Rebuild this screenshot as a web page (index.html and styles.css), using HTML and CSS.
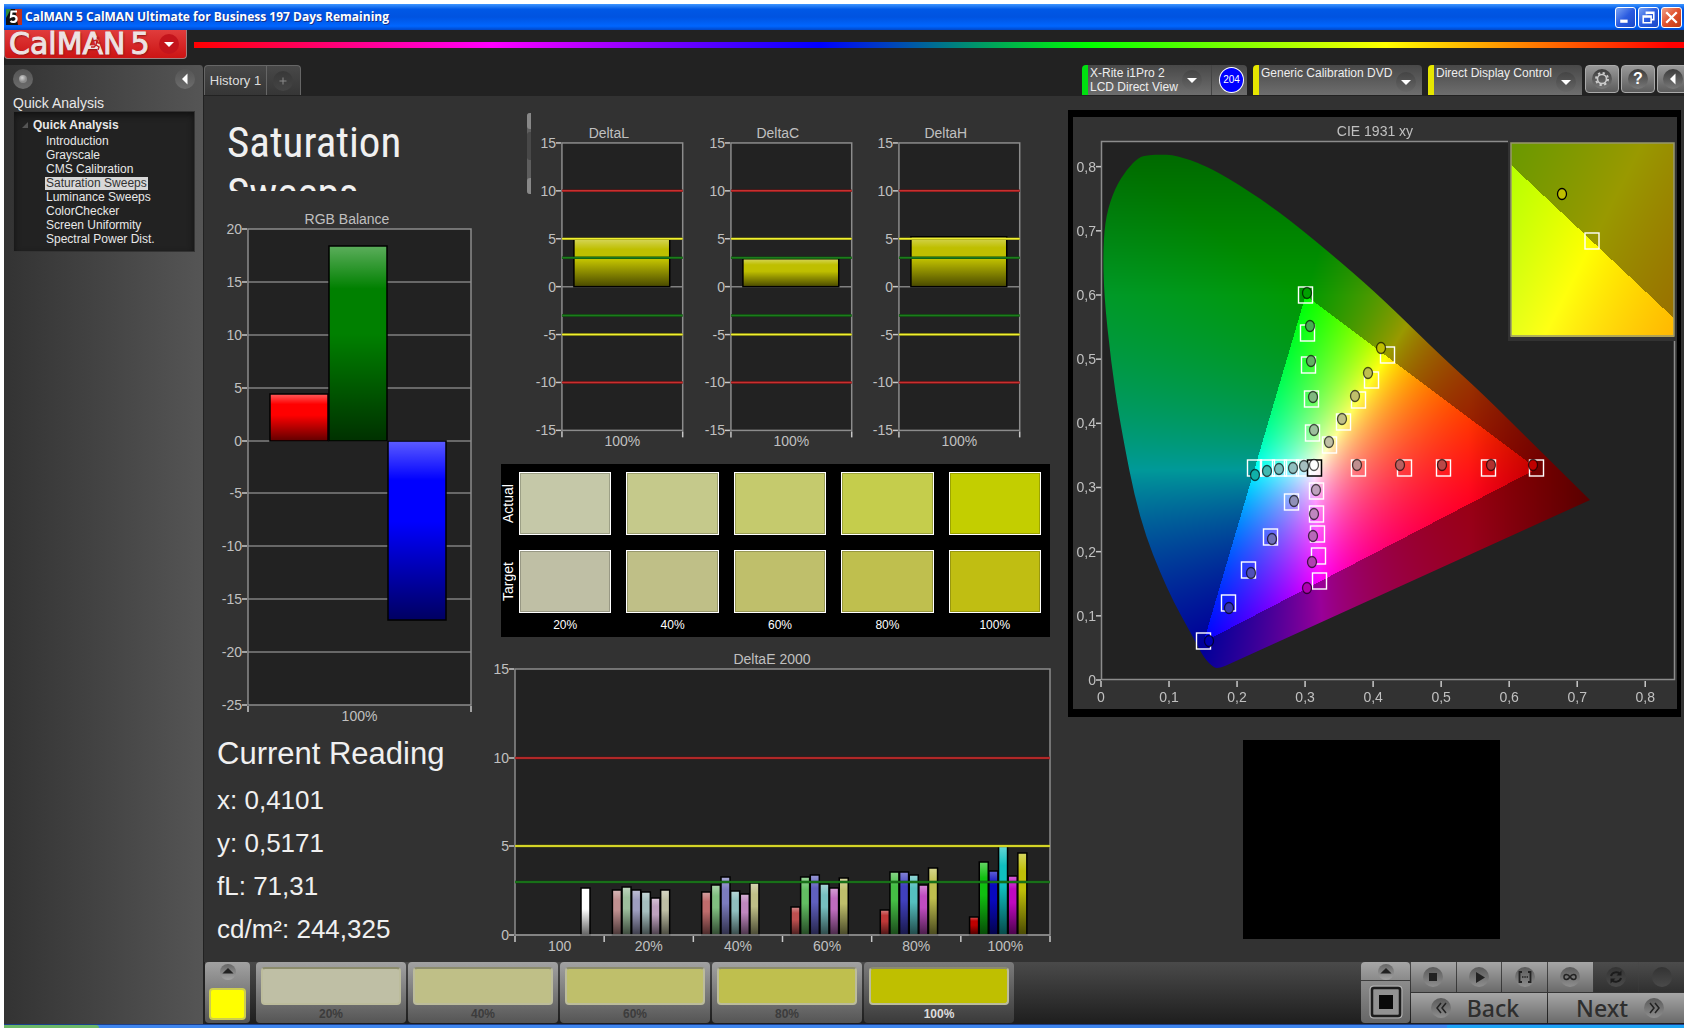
FILE: index.html
```html
<!DOCTYPE html>
<html lang="en">
<head>
<meta charset="utf-8">
<title>CalMAN 5</title>
<link rel="stylesheet" href="styles.css">
</head>
<body>
<div class="app">
  <div class="titlebar">
    <svg class="app-icon" viewBox="0 0 16 16" width="16" height="16" aria-hidden="true">
      <rect width="16" height="16" fill="#111"/><path d="M9 0h7v16h-4z" fill="#c0301c"/><path d="M0 0h5L0 9z" fill="#2f8a3a"/>
      <path d="M11 2.500H5.500L5 7.500c3-1.500 6 0 5.500 3S6 13.500 4.500 12" fill="none" stroke="#fff" stroke-width="2.200"/>
    </svg>
    <span class="titlebar-text">CalMAN 5 CalMAN Ultimate for Business 197 Days Remaining</span>
    <div class="window-buttons">
      <button class="win-btn" aria-label="Minimize"><svg viewBox="0 0 18 18"><path d="M4 12.500h7" stroke="#fff" stroke-width="3"/></svg></button>
      <button class="win-btn" aria-label="Restore"><svg viewBox="0 0 18 18"><path d="M7 6V4h7v7h-2M7 5h7M4 7.500h7.500V14H4zM4 8.500h7.500" fill="none" stroke="#fff" stroke-width="1.500"/></svg></button>
      <button class="win-btn win-close" aria-label="Close"><svg viewBox="0 0 18 18"><path d="M4 4l10 10M14 4L4 14" stroke="#fff" stroke-width="2.200"/></svg></button>
    </div>
  </div>

  <header class="brandbar">
    <button class="logo" aria-label="CalMAN 5 menu">
      <span class="logo-text">CalMAN</span><span class="logo-text">5</span>
      <svg class="logo-runner" viewBox="0 0 12 14" width="12" height="14" aria-hidden="true"><circle cx="7" cy="2" r="1.500" fill="#c21f1f"/><path d="M2 5l4-1 1 3 3 0M6 4L5 9l3 2-1 3M5 9l-2 2-3 0" fill="none" stroke="#c21f1f" stroke-width="1.400"/></svg>
      <span class="round round-red"><svg viewBox="0 0 20 20"><path d="M5 8h10l-5 5z" fill="#fff"/></svg></span>
    </button>
    <div class="spectrum"></div>
  </header>

  <div class="workspace">
    <nav class="sidebar">
      <div class="sidebar-top">
        <button class="round" aria-label="Options"><svg viewBox="0 0 20 20"><defs><radialGradient id="ball" cx=".4" cy=".35"><stop offset="0" stop-color="#d4d4d4"/><stop offset="1" stop-color="#8a8a8a"/></radialGradient></defs><circle cx="10" cy="10" r="4" fill="url(#ball)"/></svg></button>
        <button class="round" aria-label="Collapse sidebar"><svg viewBox="0 0 20 20"><path d="M12.500 4.500v11L7 10z" fill="#fff"/></svg></button>
      </div>
      <h2 class="sidebar-title">Quick Analysis</h2>
      <div class="tree">
        <div class="tree-head"><svg viewBox="0 0 6 6" width="6" height="6" aria-hidden="true"><path d="M6 0v6H0z" fill="#555"/></svg>Quick Analysis</div>
        <ul>
          <li><a href="#">Introduction</a></li>
          <li><a href="#">Grayscale</a></li>
          <li><a href="#">CMS Calibration</a></li>
          <li><a href="#" class="selected">Saturation Sweeps</a></li>
          <li><a href="#">Luminance Sweeps</a></li>
          <li><a href="#">ColorChecker</a></li>
          <li><a href="#">Screen Uniformity</a></li>
          <li><a href="#">Spectral Power Dist.</a></li>
        </ul>
      </div>
    </nav>

    <main class="main">
      <div class="toolbar">
        <div class="tabs">
          <button class="tab">History 1</button>
          <button class="tab tab-add" aria-label="Add history"><span class="round round-dark"><svg viewBox="0 0 20 20"><path d="M10 6.500v7M6.500 10h7" stroke="#8a8a8a"/></svg></span></button>
        </div>
        <div class="devices">
          <div class="device device-meter">
            <button class="device-label">X-Rite i1Pro 2<br>LCD Direct View</button>
            <span class="round round-over"><svg viewBox="0 0 20 20"><path d="M5 8h10l-5 5z" fill="#fff"/></svg></span>
            <span class="badge">204</span>
          </div>
          <div class="device device-source">
            <select class="device-label" aria-label="Source"><option>Generic Calibration DVD</option></select>
            <span class="round round-over"><svg viewBox="0 0 20 20"><path d="M5 8h10l-5 5z" fill="#fff"/></svg></span>
          </div>
          <div class="device device-display">
            <select class="device-label" aria-label="Display"><option>Direct Display Control</option></select>
            <span class="round round-over"><svg viewBox="0 0 20 20"><path d="M5 8h10l-5 5z" fill="#fff"/></svg></span>
          </div>
          <button class="tool" aria-label="Settings"><span class="round round-dark"><svg viewBox="0 0 20 20"><circle cx="10" cy="10" r="4.500" fill="none" stroke="#ccc" stroke-width="1.600"/><circle cx="10" cy="10" r="6" fill="none" stroke="#ccc" stroke-width="2" stroke-dasharray="2.300 2.400"/></svg></span></button>
          <button class="tool" aria-label="Help"><span class="round round-dark help">?</span></button>
          <button class="tool tool-cut" aria-label="Collapse toolbar"><span class="round round-dark"><svg viewBox="0 0 20 20"><path d="M12.500 4.500v11L7 10z" fill="#fff"/></svg></span></button>
        </div>
      </div>

      <div class="board">
        <section class="col-left">
          <div class="page-title">
            <h1>Saturation Sweeps</h1>
            <div class="scroll"><i></i><b></b><i></i></div>
          </div>
          <svg class="chart" id="rgb" viewBox="0 0 296 520" role="img" aria-label="RGB Balance"></svg>
          <div class="reading">
            <h2>Current Reading</h2>
            <p>x: 0,4101</p>
            <p>y: 0,5171</p>
            <p>fL: 71,31</p>
            <p>cd/m²: 244,325</p>
          </div>
        </section>

        <section class="col-mid">
          <div class="deltas">
            <svg class="chart" id="deltaL" viewBox="0 0 169 338" role="img" aria-label="DeltaL"></svg>
            <svg class="chart" id="deltaC" viewBox="0 0 169 338" role="img" aria-label="DeltaC"></svg>
            <svg class="chart" id="deltaH" viewBox="0 0 169 338" role="img" aria-label="DeltaH"></svg>
          </div>
          <div class="swatches">
            <div class="swatch-row"><span class="side-label">Actual</span>
              <i class="sw a20"></i><i class="sw a40"></i><i class="sw a60"></i><i class="sw a80"></i><i class="sw a100"></i></div>
            <div class="swatch-row"><span class="side-label">Target</span>
              <i class="sw t20"></i><i class="sw t40"></i><i class="sw t60"></i><i class="sw t80"></i><i class="sw t100"></i></div>
            <div class="swatch-names"><span>20%</span><span>40%</span><span>60%</span><span>80%</span><span>100%</span></div>
          </div>
          <svg class="chart chart-de" id="deltaE" viewBox="0 0 562 313" role="img" aria-label="DeltaE 2000"></svg>
        </section>

        <section class="col-right">
          <div class="cie">
            <canvas id="gamut" width="604" height="592"></canvas>
            <svg class="chart" id="cie" viewBox="0 0 604 592" role="img" aria-label="CIE 1931 xy"></svg>
          </div>
          <div class="preview"></div>
        </section>
      </div>

      <footer class="bottombar">
        <button class="slot slot-current" aria-label="Current colour">
          <span class="round round-small"><svg viewBox="0 0 20 20"><path d="M3 12h14l-7-7z" fill="#222"/></svg></span>
          <i class="fill current"></i>
        </button>
        <div class="slots">
          <button class="slot"><i class="fill t20"></i>20%</button>
          <button class="slot"><i class="fill t40"></i>40%</button>
          <button class="slot"><i class="fill t60"></i>60%</button>
          <button class="slot"><i class="fill t80"></i>80%</button>
          <button class="slot slot-active"><i class="fill t100"></i>100%</button>
        </div>
        <div class="pattern">
          <button class="pattern-up" aria-label="Expand patterns"><span class="round round-small"><svg viewBox="0 0 20 20"><path d="M3 12h14l-7-7z" fill="#222"/></svg></span></button>
          <button class="pattern-box" aria-label="Pattern window"><svg viewBox="0 0 34 34" width="34" height="34"><rect x="1" y="1" width="32" height="32" rx="3" fill="#8d8d8d" stroke="#b4b4b4"/><rect x="3" y="3" width="28" height="28" rx="2" fill="#929292" stroke="#1c1c1c" stroke-width="2.500"/><rect x="10" y="10" width="14" height="14" fill="#0a0a0a"/></svg></button>
        </div>
        <div class="transport">
          <button class="key" aria-label="Stop"><span class="round"><svg viewBox="0 0 20 20"><path d="M6 6h8v8H6z" fill="#222"/></svg></span></button>
          <button class="key" aria-label="Play"><span class="round"><svg viewBox="0 0 20 20"><path d="M7 5l9 5.500L7 16z" fill="#222"/></svg></span></button>
          <button class="key" aria-label="Read series"><span class="round"><svg viewBox="0 0 20 20"><path d="M7 5H4.500v10H7M13 5h2.500v10H13" fill="none" stroke="#222" stroke-width="1.800"/><path d="M7 10h6" stroke="#222" stroke-width="1.500" stroke-dasharray="1.500 .800"/></svg></span></button>
          <button class="key" aria-label="Continuous"><span class="round"><svg viewBox="0 0 20 20"><path d="M10 10c-2-3-6-3.500-6 0s4 3 6 0 6-3.500 6 0-4 3-6 0z" fill="none" stroke="#222" stroke-width="1.500"/></svg></span></button>
          <button class="key key-off" aria-label="Refresh"><span class="round round-dim"><svg viewBox="0 0 20 20"><path d="M5 9c1-4 7-5 9-2M15 11c-1 4-7 5-9 2" fill="none" stroke="#1c1c1c" stroke-width="2"/><path d="M15.500 3.500v5h-5zM4.500 16.500v-5h5z" fill="#1c1c1c"/></svg></span></button>
          <button class="key key-off" aria-label="Record"><span class="round round-dim"></span></button>
          <button class="key nav"><span class="round"><svg viewBox="0 0 20 20"><path d="M10 5l-4 5 4 5M15 5l-4 5 4 5" fill="none" stroke="#222" stroke-width="1.500"/></svg></span>Back</button>
          <button class="key nav nav-next">Next<span class="round"><svg viewBox="0 0 20 20"><path d="M6 5l4 5-4 5M11 5l4 5-4 5" fill="none" stroke="#222" stroke-width="1.500"/></svg></span></button>
        </div>
      </footer>
    </main>
  </div>
  <div class="taskbar"><i class="start"></i><i class="tray"></i></div>
</div>
<script src="charts.js"></script>
</body>
</html>
```
FILE: styles.css
```css
* { box-sizing: border-box; }
body {
  margin: 0;
  background: #fff;
  color: #e8e8e8;
  font: 12px/14px "Liberation Sans", Arial, sans-serif;
}
h1, h2, p, ul { margin: 0; padding: 0; font-weight: normal; }
ul { list-style: none; }
button, select {
  margin: 0;
  padding: 0;
  border: 0;
  background: none;
  color: inherit;
  font: inherit;
}
.app {
  display: flex;
  flex-direction: column;
  min-height: 100vh;
  padding: 4px 4px 0;
}

/* window frame */
.titlebar {
  display: flex;
  align-items: center;
  height: 26px;
  padding: 0 2px 0 2px;
  gap: 3px;
  background: linear-gradient(#3d95ff, #0058e6 20%, #0053e0 50%, #0066ff 85%, #0047c8);
}
.titlebar-text {
  flex: 1;
  color: #fff;
  font: bold 12px/16px "Open Sans", sans-serif;
  text-shadow: 1px 1px #10308c;
}
.window-buttons { display: flex; gap: 2px; }
.win-btn {
  width: 21px;
  height: 21px;
  border: 1px solid #fff;
  border-radius: 3px;
  background: linear-gradient(135deg, #7ba4f4, #2a5be0 50%, #1a49c8);
}
.win-close { background: linear-gradient(135deg, #f0a088, #e0502c 50%, #c03a14); }
.win-btn svg { display: block; }
.taskbar {
  display: flex;
  justify-content: space-between;
  height: 4px;
  border-top: 1px solid #1c3f8c;
  background: #3f86ee;
}
.start { width: 95px; background: #6cb868; border-radius: 0 4px 0 0; }
.tray { width: 237px; background: #1ea4f4; }

/* brand row */
.brandbar {
  display: flex;
  align-items: flex-start;
  gap: 7px;
  height: 35px;
  background: #222;
}
.logo {
  position: relative;
  display: flex;
  align-items: center;
  gap: 5px;
  width: 183px;
  height: 29px;
  padding-left: 4px;
  overflow: hidden;
  border: 1px solid #a08080;
  border-top: 0;
  border-radius: 0 0 4px 4px;
  background: linear-gradient(#e03c3c, #cc1414);
}
.logo-text {
  color: #eee2e2;
  font: 30px/29px "DejaVu Sans", sans-serif;
  -webkit-text-stroke: 1px #eee2e2;
  text-shadow: 1px 1px 2px #701010;
  margin-top: -2px;
}
.logo-runner { position: absolute; left: 86px; top: 6px; }
.spectrum {
  flex: 1;
  height: 6px;
  margin-top: 12px;
  background: linear-gradient(90deg, #f00, #f0f 20%, #00f 42%, #0f0 60%, #ff0 80%, #f00 99%);
}

/* round buttons */
.round {
  flex: none;
  display: block;
  width: 20px;
  height: 20px;
  border-radius: 50%;
  background: linear-gradient(#5a5a5a, #8e8e8e);
}
.round svg { display: block; width: 100%; height: 100%; }
.sidebar .round { background: linear-gradient(#555, #6c6c6c); }
.round-red { background: #c4141c; margin-left: 4px; }
.round-dark { background: linear-gradient(#3c3c3c, #787878); }
.tab .round-dark { background: linear-gradient(#383838, #444); }
.round-small { width: 16px; height: 16px; background: linear-gradient(#666, #a4a4a4); }
.round-dim { background: linear-gradient(#333, #4a4a4a); }
.help { color: #fff; font: bold 16px/20px "Liberation Sans", sans-serif; }

/* sidebar */
.workspace { flex: 1; display: flex; background: #222; }
.sidebar {
  flex: none;
  width: 200px;
  padding: 4px 8px 0 9px;
  border-right: 1px solid #222;
  border-radius: 0 4px 0 0;
  background: linear-gradient(90deg, #333, #555);
}
.sidebar-top { display: flex; justify-content: space-between; }
.sidebar-title { margin-top: 6px; font-size: 14px; line-height: 16px; }
.tree {
  height: 141px;
  padding-top: 6px;
  border: 1px solid #333;
  background: #222;
  box-shadow: inset 0 3px 6px #111;
}
.tree-head { display: flex; align-items: center; gap: 5px; padding: 0 0 2px 8px; font-weight: bold; line-height: 14px; }
.tree li { height: 14px; padding-left: 31px; }
.tree a { display: inline-block; height: 13px; padding: 0 1px; color: inherit; text-decoration: none; line-height: 13px; }
.tree .selected { background: #d8d8d8; color: #333; }

/* toolbar */
.main { flex: 1; min-width: 0; display: flex; flex-direction: column; background: #323232; }
.toolbar { display: flex; justify-content: space-between; height: 31px; background: #222; }
.tabs { display: flex; height: 30px; border: 1px solid #666; border-bottom: 0; border-radius: 4px 4px 0 0; background: linear-gradient(#484848, #363636); }
.tab { width: 61px; font-size: 13px; color: #ddd; }
.tab-add { width: 34px; padding-left: 6px; border-left: 1px solid #666; }
.devices { display: flex; gap: 6px; }
.device {
  position: relative;
  height: 30px;
  border-left: 6px solid #e6e600;
  border-radius: 4px 4px 0 0;
  background: linear-gradient(#484848, #6e6e6e);
}
.device-label {
  display: block;
  height: 30px;
  padding: 0 0 1px 2px;
  appearance: none;
  color: #eee;
  text-align: left;
}
.device select { width: 100%; padding-bottom: 15px; outline: 0; }
.device-meter { display: flex; align-items: center; width: 165px; border-color: #00e010; }
.device-meter .device-label { width: 124px; border-right: 1px solid #444; }
.device-source { width: 169px; }
.device-display { width: 154px; }
.round-over { position: absolute; right: 6px; top: 7px; pointer-events: none; background: linear-gradient(#444, #666); }
.device-meter .round-over { right: 45px; top: 5px; }
.badge {
  width: 25px;
  height: 26px;
  margin-left: 7px;
  border: 1px solid #fff;
  border-radius: 50%;
  background: #00f;
  color: #fff;
  font-size: 10px;
  line-height: 24px;
  text-align: center;
}
.tool {
  display: flex;
  align-items: center;
  justify-content: center;
  width: 34px;
  height: 28px;
  margin-right: -4px;
  border: 1px solid #aaa;
  border-radius: 4px;
  background: linear-gradient(#999, #5c5c5c);
}
.device-display { margin-right: -3px; }
.tool-cut { width: 27px; margin-right: 0; padding-left: 3px; border-right: 0; border-radius: 4px 0 0 4px; }

/* board */
.board { flex: 1; display: grid; grid-template-columns: 296fr 562fr 622fr; }
.board > section { min-width: 0; }
.chart { display: block; width: 100%; height: auto; overflow: visible; }
.chart text { fill: #c0c0c0; font-size: 14px; }
.col-left { padding-top: 17px; }
.page-title { display: flex; justify-content: space-between; height: 81px; margin: 0 -31px 11px 0; padding-left: 23px; }
.page-title h1 {
  width: 200px;
  height: 78px;
  padding-top: 4px;
  overflow: hidden;
  color: #f0f0f0;
  font: 43px/51px "Roboto Condensed", "Open Sans", sans-serif;
}
.scroll { display: flex; flex-direction: column; justify-content: space-between; width: 4px; background: #5e5e5e; border-radius: 3px 0 0 3px; }
.scroll i { height: 16px; background: #888; border-radius: 3px 0 0 3px; }
.scroll b { height: 28px; margin-bottom: 15px; background: #484848; border-radius: 3px 0 0 3px; }
.reading { padding: 6px 0 0 13px; color: #f0f0f0; font-size: 26px; line-height: 43px; white-space: nowrap; }
.reading h2 { font-size: 31px; line-height: 45px; padding-bottom: 3px; }

.deltas { display: grid; grid-template-columns: repeat(3, 1fr); margin: 21px 24px 0 32px; }
.swatches { margin: 10px 12px 0 1px; padding: 8px 9px 0 0; background: #000; }
.swatch-row { display: grid; grid-template-columns: 3px repeat(5, 1fr); column-gap: 15px; height: 63px; margin-bottom: 15px; }
.swatch-row + .swatch-row { margin-bottom: 0; }
.side-label { writing-mode: vertical-rl; transform: rotate(180deg); width: 14px; font-size: 14px; line-height: 14px; text-align: center; color: #fff; }
.sw { border: 1px solid #fff; box-shadow: inset 0 0 0 1px #0003; }
.swatch-names { display: grid; grid-template-columns: repeat(5, 1fr); column-gap: 15px; padding-left: 18px; color: #fff; text-align: center; line-height: 24px; }
.chart-de { margin-top: 8px; }
.a20 { background: #c5c8a8; } .a40 { background: #c5c98b; } .a60 { background: #c5ca6d; } .a80 { background: #c5cd4c; } .a100 { background: #c3ce00; }
.t20 { background: #bfbfa5; } .t40 { background: #bfbf87; } .t60 { background: #bfbf6b; } .t80 { background: #bfbf4e; } .t100 { background: #c0be12; }
.slots .t100 { background: #bfbf00; }

.col-right { padding: 14px 3px 0 6px; }
.cie { position: relative; border: solid #000; border-width: 7px 4px 8px 5px; }
.cie canvas { position: absolute; left: 0; top: 0; width: 100%; height: 100%; }
.cie svg { position: relative; }
.preview { width: 42%; height: 199px; margin: 23px auto 0 175px; background: #000; }

/* bottom bar */
.bottombar { display: flex; align-items: stretch; height: 62px; padding-bottom: 1px; border-left: 1px solid #222; background: linear-gradient(#4a4a4a, #1e1e1e); }
.slot {
  width: 150px;
  padding: 5px 5px 0;
  border-radius: 4px;
  background: linear-gradient(#a2a2a2, #555);
  color: #3c3c3c;
  font: bold 12px/18px "Liberation Sans", sans-serif;
}
.slot-current { display: flex; flex-direction: column; align-items: center; gap: 8px; width: 45px; padding: 2px 4px 0; margin-right: 6px; }
.slot-active { background: linear-gradient(#7c7c7c, #3a3a3a); color: #ddd; }
.slots { display: flex; gap: 2px; margin-right: auto; }
.slot .fill { display: block; height: 38px; border: 2px solid #bcbc9c; border-top-color: #8c8c6c; border-radius: 4px; }
.slot .current { width: 37px; height: 32px; background: #ff0; border-color: #cccc50; }
.slots .fill { width: 100%; }
.pattern { display: flex; flex-direction: column; gap: 1px; width: 49px; margin-right: 1px; }
.pattern-up { display: flex; justify-content: center; height: 18px; padding-top: 2px; border-radius: 4px 4px 0 0; background: linear-gradient(#a6a6a6, #8a8a8a); }
.pattern-box { flex: 1; display: flex; align-items: center; justify-content: center; border-radius: 0 0 4px 4px; background: linear-gradient(#8c8c8c, #666); }
.transport { display: grid; grid-template-columns: repeat(6, 1fr); grid-template-rows: 30px 30px; gap: 1px; width: 273px; }
.key { display: flex; align-items: center; justify-content: center; background: linear-gradient(#a6a6a6, #6a6a6a); }
.key-off { background: linear-gradient(#4c4c4c, #303030); }
.nav { grid-column: span 3; gap: 16px; padding-right: 8px; color: #2e2e2e; font: 500 23px/28px "Noto Sans", sans-serif; }
.nav-next { padding: 0 0 0 8px; }
```
FILE: charts.js
```js
const NS = 'http://www.w3.org/2000/svg';

function el(parent, name, attrs, text) {
  const node = document.createElementNS(NS, name);
  for (const key in attrs) node.setAttribute(key, attrs[key]);
  if (text !== undefined) node.textContent = text;
  parent.appendChild(node);
  return node;
}

function line(svg, x1, y1, x2, y2, stroke, width) {
  el(svg, 'line', { x1, y1, x2, y2, stroke, 'stroke-width': width || 1 });
}

/* light at the top of a bar, dark towards its foot */
function shade(svg, id) {
  const g = el(el(svg, 'defs', {}), 'linearGradient', { id, x1: 0, y1: 0, x2: 0, y2: 1 });
  [[0, '#fff', .36], [.22, '#fff', 0], [.45, '#000', 0], [1, '#000', .62]].forEach(s =>
    el(g, 'stop', { offset: s[0], 'stop-color': s[1], 'stop-opacity': s[2] }));
}

function barChart(id, o) {
  const svg = document.getElementById(id);
  const { x, y, w, h } = o.plot;
  const py = v => Math.round(y + (o.max - v) / (o.max - o.min) * h);
  shade(svg, id + '-shade');
  el(svg, 'rect', { x, y, width: w, height: h, fill: '#222' });
  (o.grid || []).forEach(v => line(svg, x, py(v), x + w, py(v), '#808080', 1.5));
  line(svg, x, py(0), x + w, py(0), '#808080', 1.5);
  o.bars.forEach(b => {
    const top = Math.min(py(0), py(b.v)), height = Math.abs(py(0) - py(b.v));
    const box = { x: b.x, y: top, width: b.w, height };
    el(svg, 'rect', { ...box, fill: b.c });
    el(svg, 'rect', { ...box, fill: `url(#${id}-shade)`, stroke: '#000', 'stroke-width': 1.5 });
  });
  el(svg, 'rect', { x, y, width: w, height: h, fill: 'none', stroke: '#8c8c8c', 'stroke-width': 1.5 });
  (o.limits || []).forEach(l => {
    line(svg, x, py(l[0]), x + w, py(l[0]), l[1], 2.5);
    line(svg, x, py(l[0]), x + w, py(l[0]), l[2], 1.5);
  });
  o.ticks.forEach(v => {
    line(svg, x - 6, py(v), x - 1, py(v), '#c8c8c8', 1.5);
    el(svg, 'text', { x: x - 6, y: py(v) + 5, 'text-anchor': 'end' }, v);
  });
  const n = o.labels.length;
  for (let i = 0; i <= n; i++) {
    const tx = x + w * i / n;
    line(svg, tx, y + h + 1, tx, y + h + 7, '#c8c8c8', 1.5);
  }
  o.labels.forEach((t, i) =>
    el(svg, 'text', { x: x + w * (i + .5) / n, y: y + h + 16, 'text-anchor': 'middle' }, t));
  el(svg, 'text', { x: o.titleX, y: y - 5, 'text-anchor': 'middle' }, o.title);
}

const RED = ['#6c1010', '#c83030'], YELLOW = ['#80800c', '#f0f030'], GREEN = ['#0c4c0c', '#1c7c1c'];

barChart('rgb', {
  plot: { x: 44, y: 24, w: 223, h: 476 }, min: -25, max: 20,
  grid: [15, 10, 5, -5, -10, -15, -20], ticks: [20, 15, 10, 5, 0, -5, -10, -15, -20, -25],
  labels: ['100%'], title: 'RGB Balance', titleX: 143,
  bars: [{ x: 66, w: 58, v: 4.4, c: '#f00' }, { x: 125, w: 58, v: 18.4, c: '#008000' }, { x: 184, w: 58, v: -17, c: '#00f' }]
});

[['L', 5], ['C', 2.95], ['H', 5.25]].forEach(([name, v]) => barChart('delta' + name, {
  plot: { x: 30, y: 26, w: 121, h: 288 }, min: -15, max: 15,
  ticks: [15, 10, 5, 0, -5, -10, -15], labels: ['100%'], title: 'Delta' + name, titleX: 77,
  limits: [[10, ...RED], [-10, ...RED], [5, ...YELLOW], [-5, ...YELLOW], [3, ...GREEN], [-3, ...GREEN]],
  bars: [{ x: 42, w: 96, v, c: '#bfbf00' }]
}));

const sweeps = [
  [2.54, 2.71, 2.54, 2.4, 2.07, 2.54],
  [2.4, 2.8, 3.27, 2.48, 2.31, 2.93],
  [1.58, 3.27, 3.37, 2.88, 2.65, 3.22],
  [1.41, 3.55, 3.55, 3.37, 2.8, 3.78],
  [1.02, 4.12, 3.61, 5, 3.33, 4.63]
];
const hues = [
  ['#bf8f8f', '#9dbf9d', '#9d9dbf', '#a5bfbf', '#bfa2bf', '#bfbfa5'],
  ['#bf6c6c', '#80bf80', '#7c7cbf', '#90bfbf', '#bf87bf', '#bfbf87'],
  ['#bf5050', '#62bf62', '#6060bf', '#76bfbf', '#bf6cbf', '#bfbf6b'],
  ['#bf3838', '#45bf45', '#4040bf', '#55bfbf', '#bf4cbf', '#bfbf4e'],
  ['#bf0000', '#10bf10', '#0808bf', '#10bfbf', '#bf08bf', '#bfbf08']
];
const deBars = [{ x: 81, w: 9, v: 2.63, c: '#fff' }];
sweeps.forEach((row, g) => row.forEach((v, i) =>
  deBars.push({ x: 14.5 + 89.3 * (g + 1) + 8.6 + i * 9.65, w: 9, v, c: hues[g][i] })));
barChart('deltaE', {
  plot: { x: 15, y: 24, w: 535, h: 266 }, min: 0, max: 15,
  ticks: [15, 10, 5, 0], labels: ['100', '20%', '40%', '60%', '80%', '100%'], title: 'DeltaE 2000', titleX: 272,
  limits: [[10, ...RED], [5, ...YELLOW], [3, ...GREEN]], bars: deBars
});

/* ---- chromaticity diagram ---- */
const PX = 680.3, PY = 641.7, OX = 28, OY = 563;
const R = [.64, .33], G = [.3, .6], B = [.15, .06];
const side = (p, a, b) => (p[0] - b[0]) * (a[1] - b[1]) - (a[0] - b[0]) * (p[1] - b[1]);
function inGamut(p) {
  const a = side(p, R, G) < 0, b = side(p, G, B) < 0, c = side(p, B, R) < 0;
  return a === b && b === c;
}
function colorAt(x, y) {
  const X = x, Y = y, Z = 1 - x - y;
  const c = [3.2406 * X - 1.5372 * Y - .4986 * Z, -.9689 * X + 1.8758 * Y + .0415 * Z, .0557 * X - .204 * Y + 1.057 * Z]
    .map(v => Math.max(0, v));
  const max = Math.max(...c);
  let k = inGamut([x, y]) ? 255 : 153;
  k *= 1 - .45 * Math.min(1, Math.max(0, (x - .54) / .19));
  k *= 1 - .31 * Math.min(1, Math.max(0, (y - .6) / .22));
  return c.map(v => v / max * k);
}
function paint(ctx, x0, y0, w, h, toXY) {
  const tmp = document.createElement('canvas');
  tmp.width = w; tmp.height = h;
  const t = tmp.getContext('2d'), img = t.createImageData(w, h);
  for (let j = 0; j < h; j++) for (let i = 0; i < w; i++) {
    const c = colorAt(...toXY(x0 + i, y0 + j)), n = (j * w + i) * 4;
    img.data[n] = c[0]; img.data[n + 1] = c[1]; img.data[n + 2] = c[2]; img.data[n + 3] = 255;
  }
  t.putImageData(img, 0, 0);
  ctx.drawImage(tmp, x0, y0);
}
/* spectral locus: straight purple line, then a smooth curve round the rest */
const locus = [[147, 551], [141, 551], [131, 541], [121, 522], [94, 473],
  [66, 402], [47, 306], [38, 245], [31, 178], [30, 131], [33, 98], [42, 71], [54, 52], [66, 40], [76, 38], [88, 37.5], [99, 38], [111, 41], [123, 45],
  [145, 55], [187, 81], [227, 111], [283, 158], [319, 191], [367, 238], [411, 278], [461, 328]];
const ctx = document.getElementById('gamut').getContext('2d');
ctx.fillStyle = '#323232';
ctx.fillRect(0, 0, 604, 592);
ctx.fillStyle = '#222';
ctx.fillRect(28, 24, 574, 539);
ctx.save();
ctx.beginPath();
ctx.moveTo(517, 383);
ctx.lineTo(152, 549);
for (let i = 0; i < locus.length - 1; i++) {
  const [ax, ay] = locus[i], [bx, by] = locus[i + 1];
  ctx.quadraticCurveTo(ax, ay, (ax + bx) / 2, (ay + by) / 2);
}
ctx.lineTo(517, 383);
ctx.closePath();
ctx.clip();
paint(ctx, 28, 30, 500, 530, (i, j) => [(i - OX) / PX, (OY - j) / PY]);
ctx.restore();

const cie = document.getElementById('cie');
el(cie, 'rect', { x: 28.5, y: 24.5, width: 573, height: 538, fill: 'none', stroke: '#8c8c8c', 'stroke-width': 1.5 });
el(cie, 'text', { x: 302, y: 19, 'text-anchor': 'middle' }, 'CIE 1931 xy');
for (let i = 0; i <= 8; i++) {
  const name = i ? '0,' + i : '0', tx = OX + i * PX / 10, ty = OY - i * PY / 10;
  line(cie, tx, 564, tx, 570, '#c8c8c8', 1.5);
  el(cie, 'text', { x: tx, y: 585, 'text-anchor': 'middle' }, name);
  line(cie, 23, ty, 28, ty, '#c8c8c8', 1.5);
  el(cie, 'text', { x: 23, y: ty + 5, 'text-anchor': 'end' }, name);
}
/* target x, y, measured x, y, fill of the measured dot */
const points = [
  [232, 178, 234, 176, '#00a000'], [234, 216, 237, 209, '#45b050'], [235, 248, 238, 244, '#62b062'], [238, 282, 240, 280, '#80b880'], [239, 316, 241, 313, '#9dbf9d'],
  [314, 238, 308, 231, '#bfbf00'], [298, 263, 295, 256, '#bfbf4e'], [285, 283, 282, 279, '#bfbf6b'], [270, 305, 269, 302, '#bfbf87'], [256, 328, 256, 325, '#bfbfa5'],
  [285, 351, 284, 348, '#bf8f8f'], [331, 351, 327, 348, '#b86060'], [370, 351, 369, 348, '#b84848'], [415, 351, 418, 348, '#b03030'], [463, 351, 460, 348, '#bf0000'],
  [181, 351, 182, 358, '#10b0a8'], [194, 351, 194, 354, '#40b8b0'], [206, 351, 206, 352, '#76bfbf'], [218, 351, 220, 351, '#90bfbf'], [230, 351, 231, 349, '#a5bfbf'],
  [243, 374, 243, 373, '#bfa2bf'], [243, 397, 241, 397, '#bf87bf'], [244, 417, 240, 419, '#b868b8'], [245, 439, 239, 445, '#b040b0'], [246, 464, 234, 471, '#b000b0'],
  [218, 385, 221, 384, '#9090b8'], [197, 420, 199, 422, '#7070b8'], [175, 453, 178, 456, '#5050b8'], [155, 486, 156, 491, '#3838b0'], [130, 524, 136, 524, '#0000b0']
];
points.forEach(p => el(cie, 'rect', { x: p[0] - 6.5, y: p[1] - 8, width: 14, height: 16, fill: 'none', stroke: '#fff', 'stroke-width': 1.4 }));
el(cie, 'rect', { x: 234.5, y: 343, width: 14, height: 16, fill: '#fff8', stroke: '#000', 'stroke-width': 1.5 });
points.concat([[0, 0, 241, 348, '#fff']]).forEach(p =>
  el(cie, 'ellipse', { cx: p[2], cy: p[3], rx: 4.5, ry: 5.5, fill: p[4], stroke: '#000a', 'stroke-width': 1.3 }));

/* magnified view of the current point */
el(cie, 'path', { d: 'M435 22h169v202H435zM438 26v194h163V26z', fill: '#323232', 'fill-rule': 'evenodd' });
paint(ctx, 437, 25, 165, 195, (i, j) => [.4193 + (i - 519) / 3290, .5053 - (j - 124) / 3900]);
el(cie, 'rect', { x: 438, y: 26, width: 163, height: 193, fill: 'none', stroke: '#98986c', 'stroke-width': 1.5 });
el(cie, 'rect', { x: 512, y: 116, width: 14, height: 16, fill: 'none', stroke: '#fff', 'stroke-width': 1.4 });
el(cie, 'ellipse', { cx: 489, cy: 77, rx: 4.5, ry: 5.5, fill: '#bfbf00', stroke: '#000', 'stroke-width': 1.3 });
```
